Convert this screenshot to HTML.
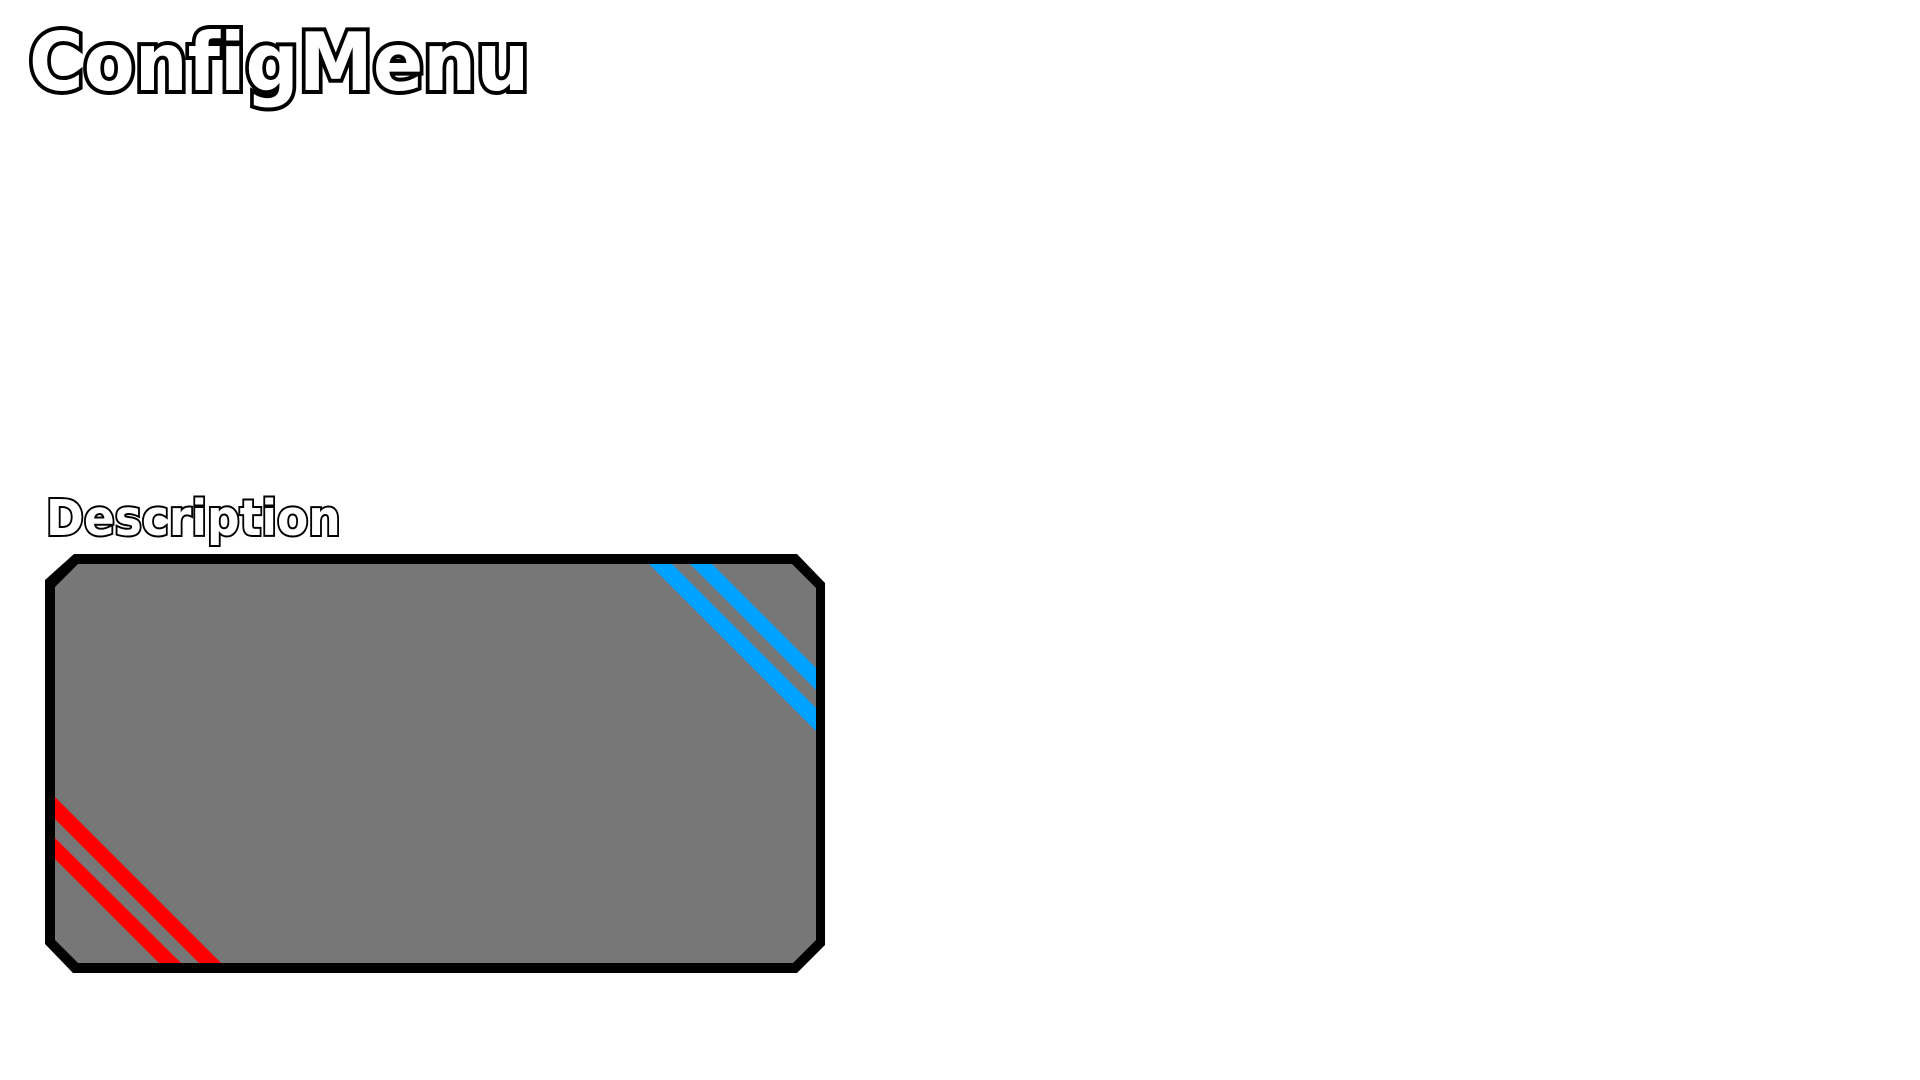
<!DOCTYPE html>
<html><head><meta charset="utf-8"><style>
html,body{margin:0;padding:0;width:1920px;height:1080px;background:#fff;overflow:hidden}
.t{position:absolute;font-family:"DejaVu Sans","Liberation Sans",sans-serif;font-weight:bold;color:#fff;paint-order:stroke fill;white-space:nowrap;line-height:1;transform-origin:0 0;font-variant-ligatures:none}
#title{left:29px;top:23px;font-size:80px;transform:scaleX(0.93);-webkit-text-stroke:8px #000}
#desc{left:46px;top:494px;font-size:49px;transform:scaleX(0.93);-webkit-text-stroke:4px #000}
svg{position:absolute;left:0;top:0}
</style></head><body>
<div class="t" id="title">ConfigMenu</div>
<div class="t" id="desc">Description</div>
<svg width="1920" height="1080">
<defs><clipPath id="c"><polygon points="78,564 792,564 816,588 816,940 793,963 78,963 55,940 55,587"/></clipPath></defs>
<polygon points="74,554 797,554 825,583 825,945 797,973 73,973 45,944 45,580" fill="#000"/>
<polygon points="78,564 792,564 816,588 816,940 793,963 78,963 55,940 55,587" fill="#777"/>
<g clip-path="url(#c)">
<polygon points="649,564 672,564 816,708 816,731" fill="#00a2ff"/>
<polygon points="690,564 712,564 816,668 816,690" fill="#00a2ff"/>
<polygon points="55,797 55,819 199,963 221,963" fill="#ff0000"/>
<polygon points="55,838 55,859 159,963 181,963" fill="#ff0000"/>
</g>
</svg>
</body></html>
